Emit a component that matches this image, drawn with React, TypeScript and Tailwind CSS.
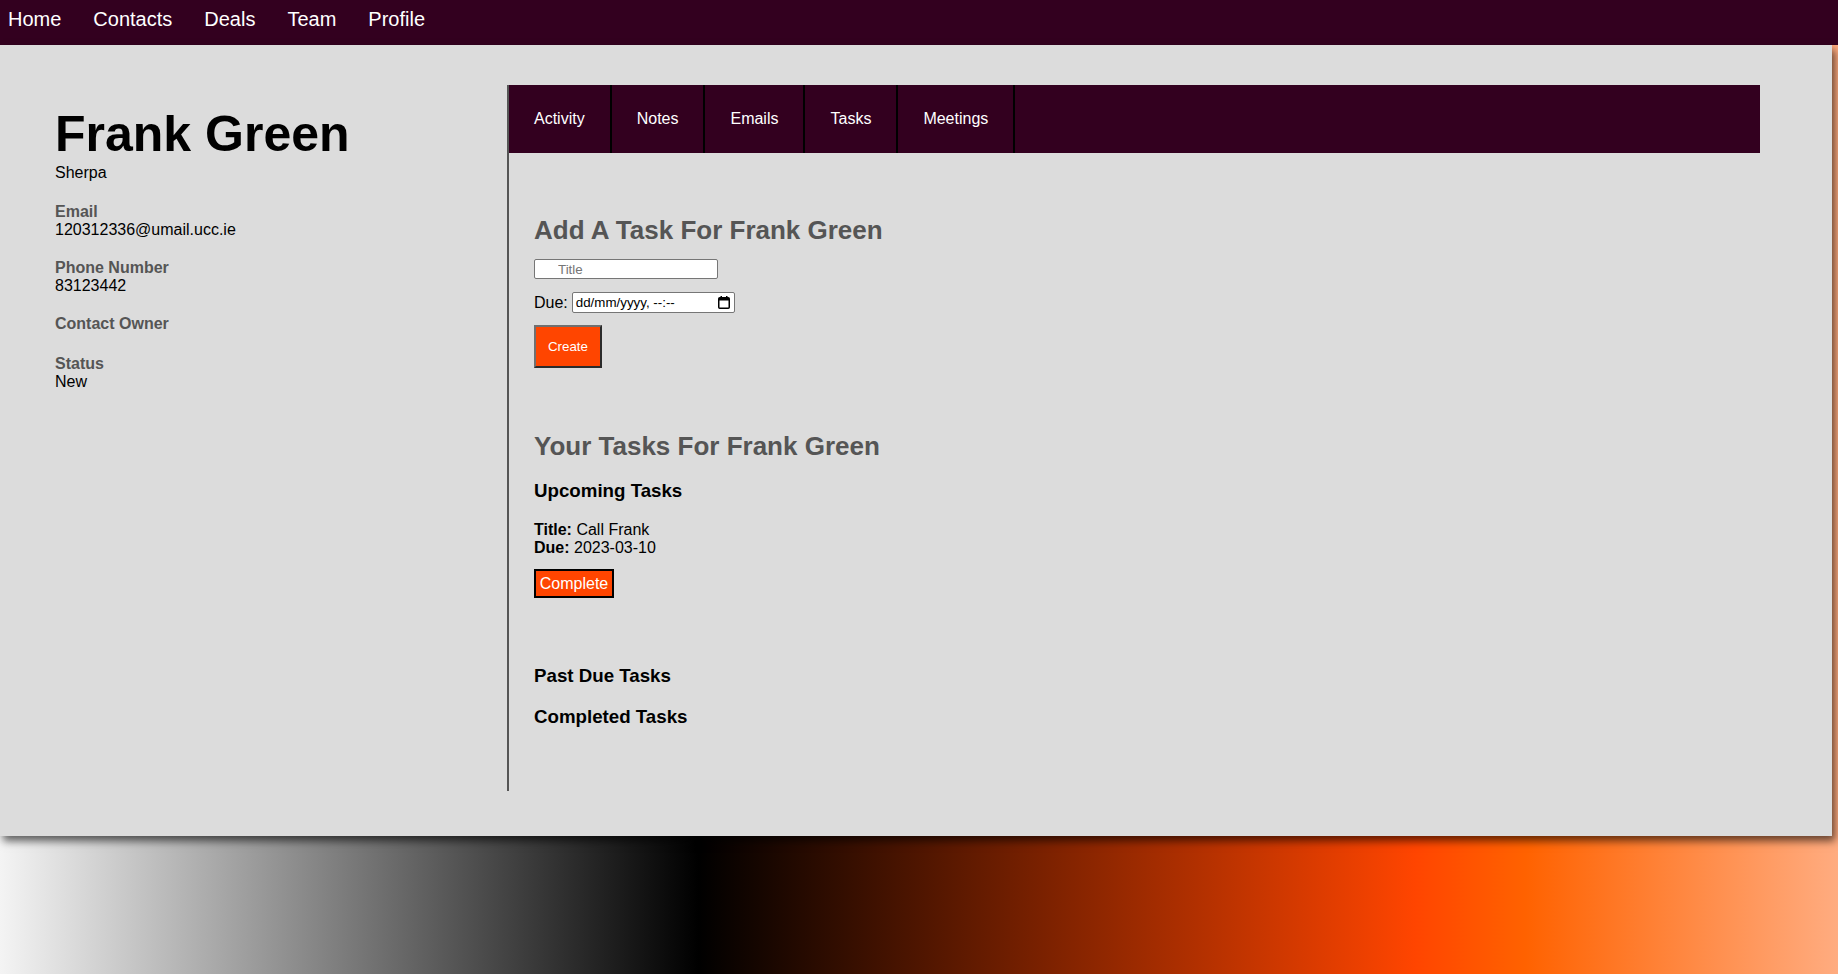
const topLinks = ['Home', 'Contacts', 'Deals', 'Team', 'Profile'];
const tabs = ['Activity', 'Notes', 'Emails', 'Tasks', 'Meetings'];

function CalendarIcon() {
  return (
    <svg width="12" height="13" viewBox="0 0 12 13" className="shrink-0">
      <rect x="0.75" y="1.75" width="10.5" height="10.5" rx="1" fill="none" stroke="#000" strokeWidth="1.5" />
      <rect x="1" y="2" width="10" height="2.5" fill="#000" />
      <rect x="2.5" y="0" width="1.5" height="2.5" fill="#000" />
      <rect x="8" y="0" width="1.5" height="2.5" fill="#000" />
    </svg>
  );
}

function Field({ label, value, className }: { label: string; value?: string; className: string }) {
  return (
    <div className={className}>
      <p className="font-bold leading-[18px] text-[#555]">{label}</p>
      {value ? <p className="leading-[18px]">{value}</p> : null}
    </div>
  );
}

export default function App() {
  return (
    <div className="min-h-screen w-full bg-[linear-gradient(90deg,#f4f4f4_0%,#000_38%,#ff4500_77%,#ff6200_83%,#ffac80_100%)] font-['Liberation_Sans',Arial,sans-serif] text-[16px] text-black">
      <nav className="flex h-[45px] gap-8 bg-[#33001f] pl-2 pt-2 text-[20px] leading-[23px] text-white">
        {topLinks.map((link) => (
          <a key={link} href="#">
            {link}
          </a>
        ))}
      </nav>

      <main className="flex w-[1832px] bg-[#dcdcdc] pb-[45px] pt-10 shadow-[3px_5px_8px_rgba(0,0,0,0.6)]">
        <aside className="w-[507px] shrink-0 pl-[55px] pt-[22px]">
          <h1 className="text-[50px] font-bold leading-[55px]">Frank Green</h1>
          <p className="mt-[2px] leading-[18px]">Sherpa</p>
          <Field className="mt-[21px]" label="Email" value="120312336@umail.ucc.ie" />
          <Field className="mt-5" label="Phone Number" value="83123442" />
          <Field className="mt-5" label="Contact Owner" />
          <Field className="mt-[22px]" label="Status" value="New" />
        </aside>

        <section className="h-[706px] w-[1253px] border-l-2 border-[#555]">
          <div className="flex h-[68px] bg-[#33001f] text-white">
            {tabs.map((tab) => (
              <button key={tab} className="flex items-center border-r-2 border-black px-[25px] text-[16px]">
                {tab}
              </button>
            ))}
          </div>

          <div className="pl-[25px]">
            <h2 className="mt-[63px] text-[26px] font-bold leading-[28px] text-[#555]">Add A Task For Frank Green</h2>
            <input
              placeholder="Title"
              className="mt-[15px] block h-[20px] w-[184px] rounded-[2px] border border-[#767676] bg-white pl-[23px] text-[13.33px] outline-none placeholder:text-[#757575]"
            />
            <div className="mt-[13px] flex items-center gap-1">
              <span className="leading-[18px]">Due:</span>
              <div className="flex h-[21px] w-[163px] items-center justify-between rounded-[2px] border border-[#767676] bg-white pl-[3px] pr-[4px] text-[13.33px]">
                <span>dd/mm/yyyy, --:--</span>
                <CalendarIcon />
              </div>
            </div>
            <button className="mt-[12px] h-[43px] w-[68px] border-2 border-b-[#2b2b2b] border-l-[#707070] border-r-[#2b2b2b] border-t-[#707070] bg-[#ff4500] text-[13.33px] text-white">
              Create
            </button>

            <h2 className="mt-[64px] text-[26px] font-bold leading-[28px] text-[#555]">Your Tasks For Frank Green</h2>
            <h3 className="mt-[20px] text-[18.72px] font-bold leading-[22px]">Upcoming Tasks</h3>
            <div className="mt-[19px] leading-[18px]">
              <p>
                <b>Title:</b> Call Frank
              </p>
              <p>
                <b>Due:</b> 2023-03-10
              </p>
            </div>
            <button className="mt-[12px] h-[29px] w-[80px] border-2 border-black bg-[#ff4500] text-[16px] leading-[18px] text-white">
              Complete
            </button>
            <h3 className="mt-[67px] text-[18.72px] font-bold leading-[22px]">Past Due Tasks</h3>
            <h3 className="mt-[19px] text-[18.72px] font-bold leading-[22px]">Completed Tasks</h3>
          </div>
        </section>
      </main>
    </div>
  );
}
